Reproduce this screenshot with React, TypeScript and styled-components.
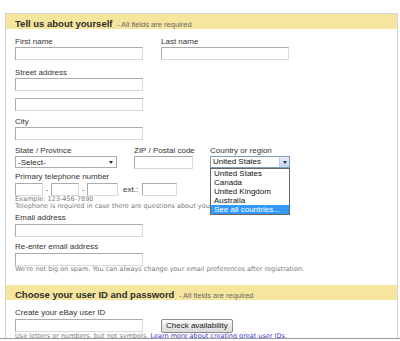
import React from 'react'
import styled, { createGlobalStyle } from 'styled-components'

const GlobalStyle = createGlobalStyle`
  html, body {
    margin: 0;
    padding: 0;
    background: #fff;
  }
  body {
    font-family: "Liberation Sans", Arial, sans-serif;
    color: #333;
  }
`

const Frame = styled.div`
  width: 400px;
  height: 339px;
  box-sizing: border-box;
  padding-top: 13px;
  border-bottom: 1px solid #9a9a9a;
  overflow: hidden;
`
const Panel = styled.div`
  width: 393px;
  margin-left: 5px;
  box-sizing: border-box;
  border: 1px solid #d6d6d6;
`
const Header = styled.div`
  height: 15px;
  line-height: 15px;
  padding-left: 9px;
  background: #f6e59c;
  white-space: nowrap;
`
const Title = styled.span`
  font-size: 9.5px;
  font-weight: bold;
  color: #2e2e2e;
`
const Note = styled.span`
  font-size: 7.5px;
  color: #6a6a6a;
`
const Body = styled.div<{ $pb?: number }>`
  padding: 0 0 ${p => p.$pb ?? 0}px 9px;
`
const Row = styled.div<{ $mt?: number; $gap: number }>`
  display: flex;
  align-items: flex-start;
  gap: ${p => p.$gap}px;
  margin-top: ${p => p.$mt ?? 0}px;
`
const Field = styled.div<{ $mt?: number; $w: number }>`
  position: relative;
  display: flex;
  flex-direction: column;
  width: ${p => p.$w}px;
  margin-top: ${p => p.$mt ?? 0}px;
`
const Label = styled.div`
  height: 10px;
  line-height: 10px;
  font-size: 8px;
  color: #333;
  white-space: nowrap;
`
const TextBox = styled.input<{ $w: number; $mt?: number }>`
  display: block;
  width: ${p => p.$w}px;
  height: 13px;
  margin: ${p => p.$mt ?? 0}px 0 0 0;
  padding: 0;
  box-sizing: border-box;
  border: 1px solid;
  border-color: #ababab #dadada #dadada #ababab;
  background: #fff;
  outline: none;
`
const SelectBox = styled.div<{ $w: number }>`
  display: flex;
  align-items: center;
  justify-content: space-between;
  width: ${p => p.$w}px;
  height: 12px;
  box-sizing: border-box;
  padding: 0 3px 0 2px;
  border: 1px solid #a5acb2;
  font-size: 8px;
  color: #222;
`
const Caret = styled.span`
  width: 0;
  height: 0;
  border-left: 2px solid transparent;
  border-right: 2px solid transparent;
  border-top: 3px solid #333;
`
const CountryBox = styled.div`
  display: flex;
  align-items: stretch;
  height: 12px;
  box-sizing: border-box;
  border: 1px solid #7f9db9;
  font-size: 8px;
  line-height: 10px;
  color: #111;
`
const CountryText = styled.span`
  flex: 1;
  padding-left: 2px;
`
const ArrowButton = styled.span`
  display: flex;
  align-items: center;
  justify-content: center;
  width: 9px;
  border-left: 1px solid #b9c9ef;
  background: linear-gradient(#e6eefc, #c3d3f7);
`
const DropList = styled.div`
  position: absolute;
  top: 22px;
  left: 0;
  width: 80px;
  box-sizing: border-box;
  border: 1px solid #666;
  background: #fff;
  z-index: 2;
`
const DropItem = styled.div<{ $active?: boolean }>`
  height: 9px;
  line-height: 9px;
  padding-left: 3px;
  font-size: 8px;
  color: ${p => (p.$active ? '#fff' : '#111')};
  background: ${p => (p.$active ? '#3399ff' : 'transparent')};
  white-space: nowrap;
`
const Dash = styled.span`
  width: 8px;
  text-align: center;
  font-size: 8px;
  line-height: 13px;
  color: #555;
`
const ExtLabel = styled.span`
  margin: 0 4px 0 5px;
  font-size: 8px;
  line-height: 13px;
  color: #333;
`
const Hint = styled.div<{ $mt?: number }>`
  margin-top: ${p => p.$mt ?? 0}px;
  font-family: "DejaVu Sans", Verdana, sans-serif;
  font-size: 6.5px;
  line-height: 7px;
  color: #7a7a7a;
  white-space: nowrap;
`
const HelpLink = styled.a`
  color: #3b3bc4;
  text-decoration: none;
`
const Button = styled.button`
  height: 14px;
  padding: 0 4px;
  box-sizing: border-box;
  border: 1px solid #8c8c8c;
  border-radius: 2px;
  background: linear-gradient(#fbfbfb, #dadada);
  font-family: "Liberation Sans", Arial, sans-serif;
  font-size: 8px;
  line-height: 12px;
  color: #222;
  white-space: nowrap;
`

const countries = ['United States', 'Canada', 'United Kingdom', 'Australia', 'See all countries...']

const App: React.FC = () => {
  return (
    <Frame>
      <GlobalStyle />
      <Panel>
        <Header>
          <Title>Tell us about yourself</Title> <Note>- All fields are required</Note>
        </Header>
        <Body $pb={12}>
          <Row $mt={8} $gap={18}>
            <Field $w={128}>
              <Label>First name</Label>
              <TextBox $w={128} />
            </Field>
            <Field $w={128}>
              <Label>Last name</Label>
              <TextBox $w={128} />
            </Field>
          </Row>
          <Field $mt={8} $w={128}>
            <Label>Street address</Label>
            <TextBox $w={128} />
            <TextBox $w={128} $mt={7} />
          </Field>
          <Field $mt={6} $w={128}>
            <Label>City</Label>
            <TextBox $w={128} />
          </Field>
          <Row $mt={6} $gap={17}>
            <Field $w={102}>
              <Label>State / Province</Label>
              <SelectBox $w={102}>
                <span>-Select-</span>
                <Caret />
              </SelectBox>
            </Field>
            <Field $w={59}>
              <Label>ZIP / Postal code</Label>
              <TextBox $w={59} />
            </Field>
            <Field $w={80}>
              <Label>Country or region</Label>
              <CountryBox>
                <CountryText>United States</CountryText>
                <ArrowButton>
                  <Caret />
                </ArrowButton>
              </CountryBox>
              <DropList>
                {countries.map((c, i) => (
                  <DropItem key={c} $active={i === countries.length - 1}>
                    {c}
                  </DropItem>
                ))}
              </DropList>
            </Field>
          </Row>
          <Field $mt={3} $w={300}>
            <Label>Primary telephone number</Label>
            <Row $mt={1} $gap={0}>
              <TextBox $w={28} />
              <Dash>-</Dash>
              <TextBox $w={28} />
              <Dash>-</Dash>
              <TextBox $w={31} />
              <ExtLabel>ext.:</ExtLabel>
              <TextBox $w={35} />
            </Row>
          </Field>
          <Hint>Example: 123-456-7890</Hint>
          <Hint>Telephone is required in case there are questions about your account.</Hint>
          <Field $mt={3} $w={128}>
            <Label>Email address</Label>
            <TextBox $w={128} $mt={1} />
          </Field>
          <Field $mt={5} $w={128}>
            <Label>Re-enter email address</Label>
            <TextBox $w={128} $mt={1} />
          </Field>
          <Hint>We're not big on spam. You can always change your email preferences after registration.</Hint>
        </Body>
        <Header>
          <Title>Choose your user ID and password</Title> <Note>- All fields are required</Note>
        </Header>
        <Body>
          <Field $mt={8} $w={300}>
            <Label>Create your eBay user ID</Label>
            <Row $mt={1} $gap={18}>
              <TextBox $w={128} />
              <Button>Check availability</Button>
            </Row>
          </Field>
          <Hint>
            Use letters or numbers, but not symbols. <HelpLink href="#">Learn more about creating great user IDs.</HelpLink>
          </Hint>
        </Body>
      </Panel>
    </Frame>
  )
}

export default App
